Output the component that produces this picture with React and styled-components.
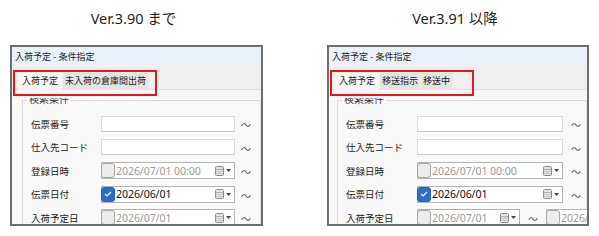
import styled, { createGlobalStyle } from 'styled-components';

const Global = createGlobalStyle`
  body {
    margin: 0;
    background: #fff;
    font-family: "Noto Sans", "Noto Sans CJK JP", sans-serif;
  }
`

const Page = styled.div`
  display: flex;
  gap: 64px;
  padding-left: 10px;
  width: 599px;
  height: 236px;
  box-sizing: border-box;
`

const Column = styled.div`
  display: flex;
  flex-direction: column;
  width: ${p => p.$w}px;
`

const Heading = styled.div`
  height: 45px;
  padding-top: 8px;
  box-sizing: border-box;
  text-align: center;
  font-size: 14.5px;
  line-height: 20px;
  color: #1e1e1e;
  margin-left: ${p => p.$shift || 0}px;
`

const Panel = styled.div`
  height: 181px;
  border: 2px solid #6e6e6e;
  box-sizing: border-box;
  display: flex;
  flex-direction: column;
  overflow: hidden;
  background: #f9f9f9;
`

const TitleBar = styled.div`
  height: 18px;
  flex: none;
  background: #eaf1fa;
  padding-left: 3px;
  font-size: 9px;
  line-height: 19px;
  color: #222;
`

const TabBar = styled.div`
  height: 24px;
  flex: none;
  background: #efefef;
  position: relative;
  z-index: 2;
`

const Marker = styled.div`
  margin: 5px 0 0 1px;
  width: 144px;
  height: 26px;
  border: 2px solid #e8161b;
  box-sizing: border-box;
  display: flex;
  align-items: flex-start;
  padding: 1px 0 0 3px;
`

const Tab = styled.div`
  height: 17px;
  padding: 0 ${p => (p.$active ? 4 : 2)}px;
  margin-right: 1px;
  font-size: 9px;
  line-height: 16px;
  color: #1a1a1a;
  background: ${p => (p.$active ? '#f7f7f7' : '#e4e4e4')};
  white-space: nowrap;
`

const Strip = styled.div`
  height: 8px;
  flex: none;
  background: #f5f5f5;
  border-top: 1px solid #dedede;
`

const Content = styled.div`
  flex: 1;
  overflow: hidden;
  padding: 2px 0 0 ${p => p.$inset}px;
`

const Group = styled.div`
  position: relative;
  border: 1px solid #dadada;
  border-right-color: #e2e2e2;
  padding: 11px 0 0 8px;
  height: 140px;
  box-sizing: border-box;
`

const Legend = styled.span`
  position: absolute;
  top: -8px;
  left: 4px;
  padding: 0 2px;
  font-size: 10px;
  line-height: 12px;
  color: #333;
  background: #f9f9f9;
`

const Row = styled.div`
  display: flex;
  align-items: center;
  height: 23.5px;
`

const Label = styled.div`
  width: ${p => p.$w}px;
  flex: none;
  font-size: 9.5px;
  color: #222;
  white-space: nowrap;
`

const TextBox = styled.div`
  width: ${p => p.$w}px;
  height: 16px;
  flex: none;
  background: #fff;
  border: 1px solid #dcdcdc;
  border-bottom-color: #c8c8c8;
  box-sizing: border-box;
`

const DateBox = styled.div`
  width: ${p => p.$w}px;
  height: 17px;
  flex: none;
  background: #fff;
  border: 1px solid #b4b4b4;
  box-sizing: border-box;
  display: flex;
  align-items: center;
  font-size: 10.6px;
  color: ${p => (p.$on ? '#111' : '#9a9a9a')};
`

const Check = styled.div`
  width: 14px;
  height: 15px;
  flex: none;
  margin-left: -1px;
  border: 1px solid ${p => (p.$on ? '#2165b8' : '#a8a8a8')};
  border-radius: 3px;
  background: ${p => (p.$on ? '#2b6dc2' : '#ececec')};
  box-sizing: border-box;
  display: flex;
  align-items: center;
  justify-content: center;
  margin-right: 1px;
`

const DateText = styled.span`
  flex: 1;
  white-space: nowrap;
  overflow: hidden;
  letter-spacing: -0.1px;
`

const Picker = styled.div`
  flex: none;
  display: flex;
  align-items: center;
  gap: 2px;
  padding-right: 3px;
`

const Tilde = styled.div`
  flex: none;
  width: ${p => p.$w}px;
  padding-top: 3px;
  line-height: 12px;
  text-align: center;
  font-size: 10px;
  color: #555;
`

function CalendarIcon() {
  return (
    <Picker>
      <svg width="9" height="10" viewBox="0 0 9 10">
        <rect x="0.5" y="0.5" width="8" height="9" rx="1" fill="#e3e3e3" stroke="#8c8c8c" />
        <line x1="1" y1="3.5" x2="8" y2="3.5" stroke="#b0b0b0" />
        <line x1="1" y1="5.5" x2="8" y2="5.5" stroke="#c4c4c4" />
        <line x1="1" y1="7.5" x2="8" y2="7.5" stroke="#c4c4c4" />
      </svg>
      <svg width="5" height="3" viewBox="0 0 5 3">
        <path d="M0 0 H5 L2.5 3 Z" fill="#34466c" />
      </svg>
    </Picker>
  )
}

function DateField({ w, on, value }) {
  return (
    <DateBox $w={w} $on={on}>
      <Check $on={on}>
        {on && (
          <svg width="8" height="6" viewBox="0 0 8 6">
            <path d="M1 3 L3 5 L7 1" fill="none" stroke="#fff" strokeWidth="1.1" />
          </svg>
        )}
      </Check>
      <DateText>{value}</DateText>
      <CalendarIcon />
    </DateBox>
  )
}

function Window({ tabs, inset, labelW, fieldW, tildeW, split }) {
  return (
    <Panel>
      <TitleBar>入荷予定 - 条件指定</TitleBar>
      <TabBar>
        <Marker>
          <Tab $active>入荷予定</Tab>
          {tabs.map(t => <Tab key={t}>{t}</Tab>)}
        </Marker>
      </TabBar>
      <Strip />
      <Content $inset={inset}>
        <Group>
          <Legend>検索条件</Legend>
          <Row>
            <Label $w={labelW}>伝票番号</Label>
            <TextBox $w={fieldW} />
            <Tilde $w={tildeW}>～</Tilde>
          </Row>
          <Row>
            <Label $w={labelW}>仕入先コード</Label>
            <TextBox $w={fieldW} />
            <Tilde $w={tildeW}>～</Tilde>
          </Row>
          <Row>
            <Label $w={labelW}>登録日時</Label>
            <DateField w={fieldW} value="2026/07/01 00:00" />
            <Tilde $w={tildeW}>～</Tilde>
          </Row>
          <Row>
            <Label $w={labelW}>伝票日付</Label>
            <DateField w={fieldW} on value="2026/06/01" />
            <Tilde $w={tildeW}>～</Tilde>
          </Row>
          <Row>
            <Label $w={labelW}>入荷予定日</Label>
            {split ? (
              <>
                <DateField w={103} value="2026/07/01" />
                <Tilde $w={26}>～</Tilde>
                <DateField w={103} value="2026/07/01" />
              </>
            ) : (
              <>
                <DateField w={fieldW} value="2026/07/01" />
                <Tilde $w={tildeW}>～</Tilde>
              </>
            )}
          </Row>
        </Group>
      </Content>
    </Panel>
  )
}

export default function App() {
  return (
    <>
      <Global />
      <Page>
        <Column $w={253}>
          <Heading $shift={-6}>Ver.3.90 まで</Heading>
          <Window
            tabs={['未入荷の倉庫間出荷']}
            inset={10}
            labelW={70}
            fieldW={134}
            tildeW={22}
          />
        </Column>
        <Column $w={262}>
          <Heading $shift={-6}>Ver.3.91 以降</Heading>
          <Window
            tabs={['移送指示', '移送中']}
            inset={8}
            labelW={71}
            fieldW={146}
            tildeW={26}
            split
          />
        </Column>
      </Page>
    </>
  )
}
